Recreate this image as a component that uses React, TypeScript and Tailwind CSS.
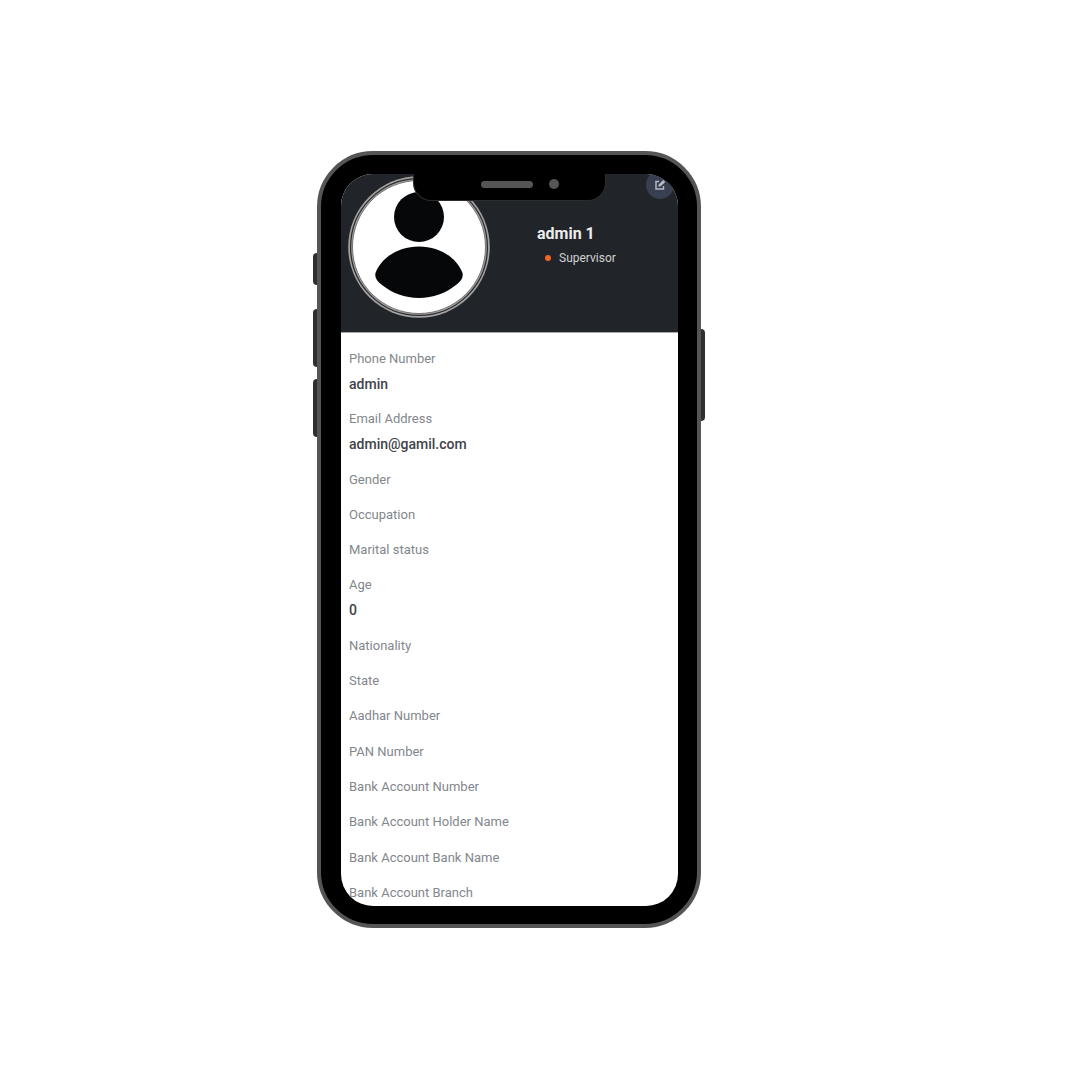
import React from "react";

type Field = { label: string; value?: string };

const fields: Field[] = [
  { label: "Phone Number", value: "admin" },
  { label: "Email Address", value: "admin@gamil.com" },
  { label: "Gender" },
  { label: "Occupation" },
  { label: "Marital status" },
  { label: "Age", value: "0" },
  { label: "Nationality" },
  { label: "State" },
  { label: "Aadhar Number" },
  { label: "PAN Number" },
  { label: "Bank Account Number" },
  { label: "Bank Account Holder Name" },
  { label: "Bank Account Bank Name" },
  { label: "Bank Account Branch" },
];

function Avatar() {
  return (
    <svg viewBox="0 0 142 142" className="size-[142px] shrink-0" role="img" aria-label="Profile picture">
      <circle cx="71" cy="71" r="70.8" fill="#a3a2a2" />
      <circle cx="71" cy="71" r="68.4" fill="#a3a2a2" stroke="#2f2e2f" strokeWidth="1.3" />
      <circle cx="71" cy="71" r="66.5" fill="#fff" stroke="#5d5c5d" strokeWidth="0.8" />
      <circle cx="71" cy="41" r="25" fill="#060709" />
      <path
        d="M71 70.500C92 70.500 109 82 114.500 97C115.500 101 113.500 105 108 109C98 117 85 122 71 122C57 122 44 117 34 109C28.500 105 26.500 101 27.500 97C33 82 50 70.500 71 70.500Z"
        fill="#060709"
      />
    </svg>
  );
}

function EditIcon() {
  return (
    <svg viewBox="0 0 12 12" className="size-3" fill="none" aria-hidden="true">
      <path d="M5 2.500H2V10H9.500V7" stroke="#b4b8c0" strokeWidth="1.5" />
      <path d="M4.300 7.700L4.800 5.500L9.200 1L11.300 3.100L6.700 7.300Z" fill="#b9bdc5" />
    </svg>
  );
}

function Notch() {
  return (
    <div className="absolute inset-x-0 top-0 flex justify-center">
      <div className="flex h-[27px] w-[193px] items-start rounded-b-[18px] border border-t-0 border-[#2c2c2c] bg-black pt-[5px] pl-[67px]">
        <span className="mt-[2px] h-[7px] w-[52px] rounded-full bg-[#555]" />
        <span className="ml-4 size-[10px] rounded-full bg-[#555]" />
      </div>
    </div>
  );
}

function SideButtons() {
  return (
    <>
      <div className="absolute top-[102px] -left-[4px] flex flex-col">
        <span className="h-8 w-[4px] rounded-l-[4px] bg-[#2f2f2f]" />
        <span className="mt-6 h-[58px] w-[4px] rounded-l-[4px] bg-[#2f2f2f]" />
        <span className="mt-3 h-[58px] w-[4px] rounded-l-[4px] bg-[#2f2f2f]" />
      </div>
      <span className="absolute top-[178px] -right-[4px] h-[92px] w-[4px] rounded-r-[4px] bg-[#2f2f2f]" />
    </>
  );
}

export default function App() {
  return (
    <main className="flex min-h-screen justify-center bg-white pt-[151px] pr-[62px] pb-[151px] font-['Roboto',sans-serif]">
      <div className="relative flex aspect-[384/777] w-full max-w-[384px] flex-col self-start">
        <SideButtons />
        <div className="flex flex-1 flex-col rounded-[56px] border-4 border-[#555] bg-black pt-[19px] pr-[19px] pb-[18px] pl-5">
          <div className="relative flex flex-1 flex-col overflow-hidden rounded-[32px] bg-white">
            <header className="flex bg-[#212429] pt-0.5 pb-[14px] pl-[7px]">
              <Avatar />
              <div className="ml-[47px] flex-1 pt-[46px]">
                <h1 className="text-base leading-6 font-bold text-[#ececed]">admin 1</h1>
                <p className="flex items-center pl-2 text-[12px] leading-6 text-[#d0d1d2]">
                  <span className="mr-2 size-[6px] rounded-full bg-[#f26522]" />
                  Supervisor
                </p>
              </div>
              <button
                type="button"
                aria-label="Edit profile"
                className="absolute -top-[3px] right-1 flex size-7 items-center justify-center rounded-full bg-[#373f50]"
              >
                <EditIcon />
              </button>
            </header>
            <dl className="flex flex-1 flex-col justify-between border-t border-[#a9a9ab] px-2 pt-4 pb-[3px]">
              {fields.map((f) => (
                <div key={f.label} className="flex flex-col gap-[5px]">
                  <dt className="text-[13px] leading-5 text-[#82878d]">{f.label}</dt>
                  {f.value && <dd className="text-[14px] leading-5 font-medium text-[#3f4349]">{f.value}</dd>}
                </div>
              ))}
            </dl>
            <Notch />
          </div>
        </div>
      </div>
    </main>
  );
}
